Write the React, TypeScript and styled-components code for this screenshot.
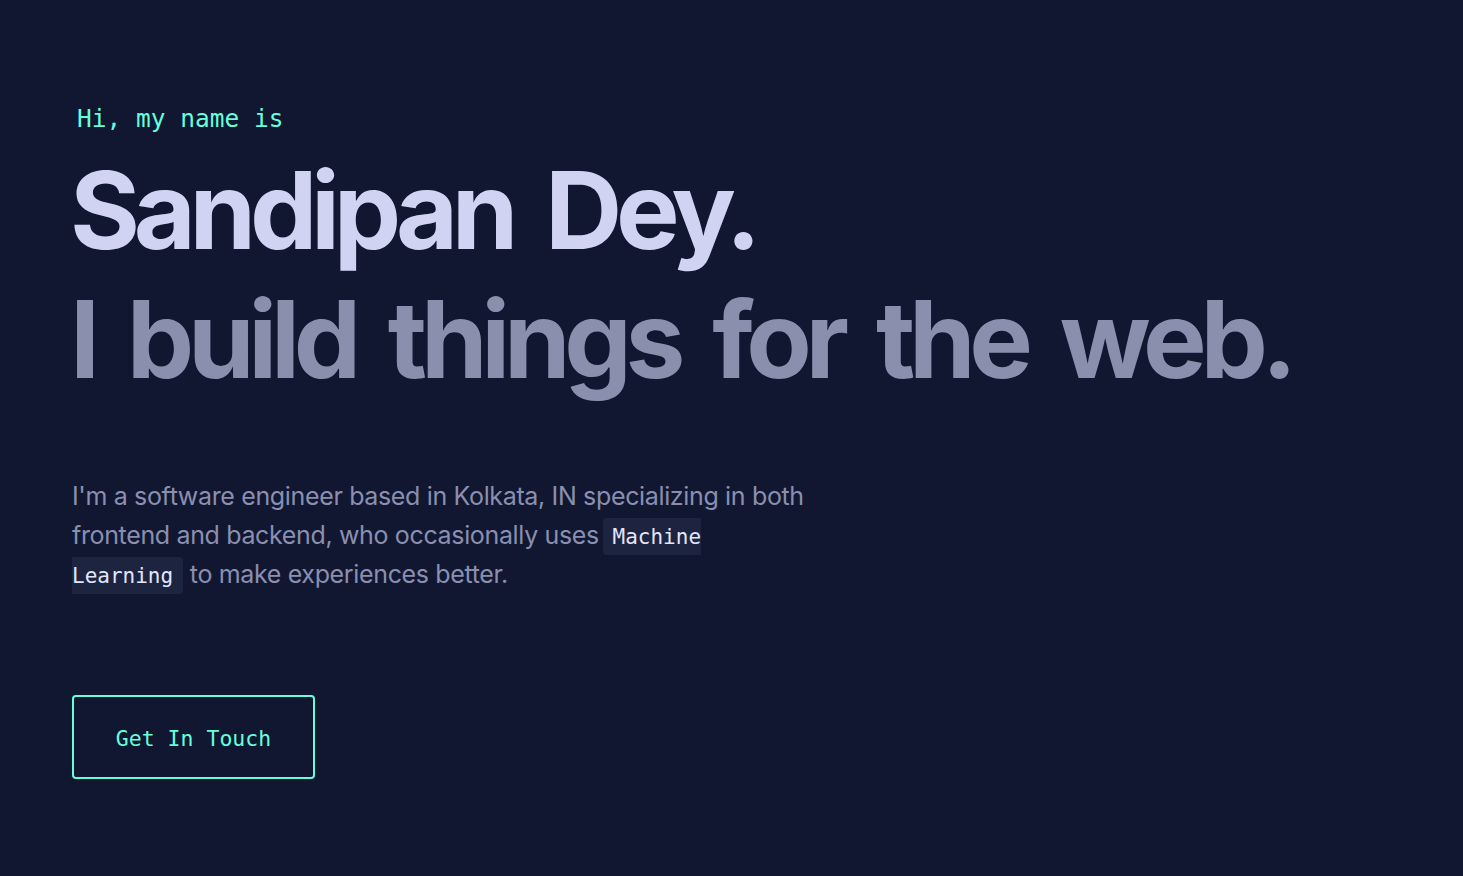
import React from "react";
import styled, { createGlobalStyle } from "styled-components";

const GlobalStyle = createGlobalStyle`
  html, body { margin: 0; padding: 0; background: #111731; }
  body { font-family: Inter, "Noto Sans", sans-serif; -webkit-font-smoothing: antialiased; }
  * { box-sizing: border-box; }
`;

const Hero = styled.section`
  min-height: 876px;
  padding: 103px 72px 0 72px;
  display: flex;
  flex-direction: column;
  align-items: flex-start;
`;

const Greeting = styled.h1`
  margin: 0 0 11px 5px;
  color: #64ffda;
  font-family: "DejaVu Sans Mono", "Liberation Mono", monospace;
  font-weight: 400;
  font-size: 24.5px;
  line-height: 32px;
`;

const BigHeading = styled.h2<{ $tone: "light" | "slate" }>`
  margin: 0 0 0 -2px;
  font-family: Inter, "Noto Sans", sans-serif;
  font-weight: 700;
  font-size: 107px;
  line-height: 129px;
  letter-spacing: -6.3px;
  word-spacing: 14px;
  color: ${(p) => (p.$tone === "light" ? "#d0d3f2" : "#8a8fad")};
`;

const Lead = styled.p`
  margin: 73px 0 0 0;
  max-width: 745px;
  color: #8a8fb0;
  font-family: Inter, "Noto Sans", sans-serif;
  font-size: 25px;
  line-height: 39px;
  letter-spacing: -0.35px;
`;

const Code = styled.code`
  font-family: "DejaVu Sans Mono", "Liberation Mono", monospace;
  font-size: 21px;
  line-height: 1;
  color: #e2e6ff;
  background: #1d2440;
  border-radius: 4px;
  padding: 7px 10px 6px 10px;
  margin-left: -3px;
  letter-spacing: 0;
`;

const CtaButton = styled.a`
  margin-top: 101px;
  display: inline-flex;
  align-items: center;
  justify-content: center;
  width: 243px;
  height: 84px;
  padding-top: 3px;
  border: 2px solid #64ffda;
  border-radius: 4px;
  color: #64ffda;
  font-family: "DejaVu Sans Mono", "Liberation Mono", monospace;
  font-size: 21.5px;
  text-decoration: none;
`;

export default function App() {
  return (
    <>
      <GlobalStyle />
      <Hero>
        <Greeting>Hi, my name is</Greeting>
        <BigHeading $tone="light">Sandipan Dey.</BigHeading>
        <BigHeading as="h3" $tone="slate">I build things for the web.</BigHeading>
        <Lead>
          I'm a software engineer based in Kolkata, IN specializing in both frontend and backend, who
          occasionally uses <Code>Machine Learning</Code> to make experiences better.
        </Lead>
        <CtaButton href="#contact">Get In Touch</CtaButton>
      </Hero>
    </>
  );
}
